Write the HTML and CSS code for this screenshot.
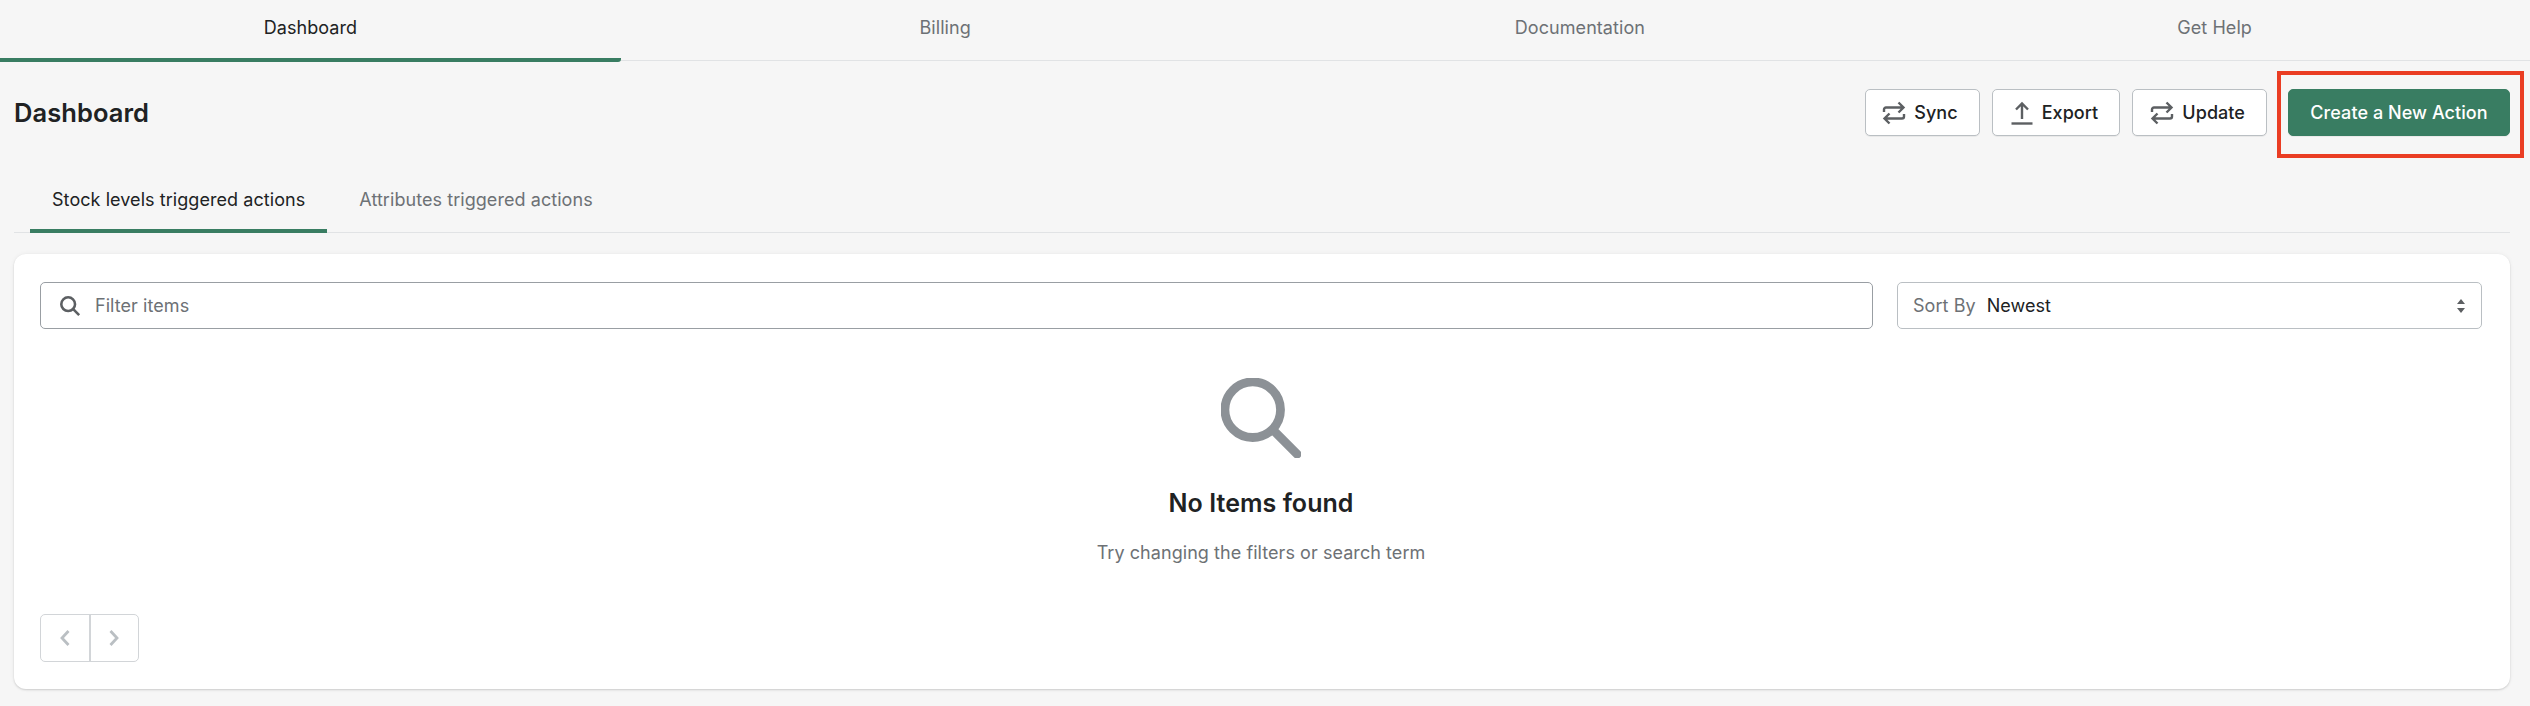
FILE: index.html
```html
<!DOCTYPE html>
<html lang="en">
<head>
  <meta charset="UTF-8" />
  <title>Dashboard</title>
  <link rel="stylesheet" href="styles.css">
</head>
<body>
  <!-- Main navigation -->
  <nav class="main-nav">
    <a class="main-tab active">Dashboard</a>
    <a class="main-tab">Billing</a>
    <a class="main-tab">Documentation</a>
    <a class="main-tab">Get Help</a>
  </nav>

  <main class="page">
    <header class="page-header">
      <h1>Dashboard</h1>
      <div class="actions">
        <button class="btn btn-sync">
          <svg class="btn-icon" viewBox="0 0 24 24"><path d="M2 11V8.500a2 2 0 0 1 2-2H21M16.500 1.500l5 5-5 5M22 13v2.500a2 2 0 0 1-2 2H3M7.500 12.500l-5 5 5 5"/></svg>
          Sync
        </button>
        <button class="btn">
          <svg class="btn-icon" viewBox="0 0 24 24"><path d="M12 18V2.500M6 8.500l6-6 6 6"/><path d="M1.500 22.500h21"/></svg>
          Export
        </button>
        <button class="btn">
          <svg class="btn-icon" viewBox="0 0 24 24"><path d="M2 11V8.500a2 2 0 0 1 2-2H21M16.500 1.500l5 5-5 5M22 13v2.500a2 2 0 0 1-2 2H3M7.500 12.500l-5 5 5 5"/></svg>
          Update
        </button>
        <div class="highlighted">
          <button class="btn btn-primary">Create a New Action</button>
          <span class="red-box"></span>
        </div>
      </div>
    </header>

    <!-- Action type tabs -->
    <div class="sub-tabs">
      <a class="sub-tab active">Stock levels triggered actions</a>
      <a class="sub-tab">Attributes triggered actions</a>
    </div>

    <section class="card">
      <div class="filters">
        <label class="search">
          <svg class="search-icon" viewBox="0 0 24 24"><circle cx="10" cy="10" r="7.500"/><path d="m15.500 15.500 6.500 6.500"/></svg>
          <input type="text" placeholder="Filter items" />
        </label>
        <div class="sort">
          <span class="sort-label">Sort By</span>
          <span class="sort-value">Newest</span>
          <svg class="sort-arrows" viewBox="0 0 10 16"><path d="M5 1l4 5H1zM5 15l-4-5h8z"/></svg>
        </div>
      </div>

      <div class="empty">
        <svg class="empty-icon" viewBox="0 0 82 82"><circle cx="32.500" cy="32.500" r="28.500"/><path d="m54 54 24 24"/></svg>
        <h2>No Items found</h2>
        <p>Try changing the filters or search term</p>
      </div>

      <div class="pager">
        <button class="pager-btn"><svg viewBox="0 0 12 18"><path d="M9.500 2 3 9l6.500 7"/></svg></button>
        <button class="pager-btn"><svg viewBox="0 0 12 18"><path d="M2.500 2 9 9l-6.500 7"/></svg></button>
      </div>
    </section>
  </main>
</body>
</html>
```

FILE: styles.css
```css
* {
  box-sizing: border-box;
}

body {
  margin: 0;
  background: #f6f6f6;
  color: #202223;
  font-family: Inter, "Liberation Sans", sans-serif;
  font-size: 18px;
  letter-spacing: 0.06px;
}

.main-nav {
  display: flex;
  gap: 14px;
  height: 61px;
  padding-right: 5px;
  border-bottom: 1px solid #e1e3e5;
}

.main-tab {
  flex: 1;
  height: 62px;
  padding-top: 17px;
  text-align: center;
  font-size: 18px;
  line-height: 22px;
  color: #6d7175;
}

.main-tab.active {
  color: #202223;
  border-bottom: 4px solid #397d62;
  border-radius: 0 3px 3px 0;
}

.page {
  padding: 28px 20px 17px 14px;
}

.page-header {
  display: flex;
  align-items: center;
  justify-content: space-between;
  height: 47px;
}

h1 {
  margin: 0;
  font-size: 25.500px;
  font-weight: 600;
}

.actions {
  display: flex;
  align-items: center;
  gap: 12px;
}

.btn {
  display: flex;
  align-items: center;
  justify-content: center;
  gap: 8px;
  height: 47px;
  padding: 0 21px 0 17px;
  background: white;
  border: 1px solid #babfc3;
  border-radius: 5px;
  box-shadow: 0 1px 0 rgba(0,0,0,0.05);
  color: #202223;
  font-family: inherit;
  font-size: 18px;
  font-weight: 500;
  letter-spacing: inherit;
}

.btn-sync {
  padding-left: 16px;
}

.btn-icon {
  width: 24px;
  height: 24px;
  fill: none;
  stroke: #5c5f62;
  stroke-width: 2.400;
}

.highlighted {
  position: relative;
  margin-left: 9px;
}

.btn-primary {
  width: 222px;
  padding: 0;
  background: #397d62;
  border-color: #397d62;
  color: white;
}

.red-box {
  position: absolute;
  top: -18px;
  right: -14px;
  bottom: -22px;
  left: -11px;
  border: 4px solid #ea3d23;
}

.sub-tabs {
  display: flex;
  height: 97px;
  padding: 0 16px;
  border-bottom: 1px solid #e1e3e5;
}

.sub-tab {
  height: 97px;
  padding: 53px 22px 0;
  margin-right: 10px;
  font-size: 18px;
  line-height: 22px;
  color: #6d7175;
}

.sub-tab.active {
  color: #202223;
  border-bottom: 4px solid #397d62;
  border-radius: 3px 3px 0 0;
}

.card {
  margin-top: 21px;
  height: 435px;
  padding: 28px 28px 28px 26px;
  background: white;
  border-radius: 12px;
  box-shadow: 0 0 5px rgba(23,24,24,0.05), 0 1px 2px rgba(0,0,0,0.15);
}

.filters {
  display: flex;
  gap: 24px;
}

.search {
  flex: 1;
  display: flex;
  align-items: center;
  gap: 14px;
  height: 47px;
  padding: 0 18px;
  border: 1px solid #999ea3;
  border-radius: 5px;
}

.search-icon {
  width: 22px;
  height: 22px;
  fill: none;
  stroke: #5c5f62;
  stroke-width: 2.800;
}

.search input {
  flex: 1;
  border: 0;
  outline: 0;
  padding: 0;
  font-family: inherit;
  font-size: 18px;
  letter-spacing: inherit;
}

.search input::placeholder {
  color: #6d7175;
  opacity: 1;
}

.sort {
  width: 585px;
  display: flex;
  align-items: center;
  height: 47px;
  padding: 0 15px;
  border: 1px solid #babfc3;
  border-radius: 5px;
}

.sort-label {
  color: #6d7175;
  margin-right: 11px;
}

.sort-value {
  flex: 1;
}

.sort-arrows {
  width: 10px;
  height: 16px;
  fill: #5c5f62;
}

.empty {
  display: flex;
  flex-direction: column;
  align-items: center;
  padding-top: 49px;
}

.empty-icon {
  width: 80px;
  height: 80px;
  fill: none;
  stroke: #8c9196;
  stroke-width: 9;
  stroke-linecap: round;
}

.empty h2 {
  margin: 29px 0 0;
  font-size: 25px;
  line-height: 32px;
  font-weight: 600;
}

.empty p {
  margin: 22px 0 0;
  font-size: 18px;
  line-height: 24px;
  color: #6d7175;
}

.pager {
  display: flex;
  width: 99px;
  height: 48px;
  margin-top: 49px;
  border: 1px solid #d2d5d8;
  border-radius: 5px;
}

.pager-btn {
  flex: 1;
  display: flex;
  align-items: center;
  justify-content: center;
  background: none;
  border: 0;
  padding: 0;
}

.pager-btn + .pager-btn {
  border-left: 2px solid #d2d5d8;
}

.pager-btn svg {
  width: 12px;
  height: 18px;
  fill: none;
  stroke: #babfc3;
  stroke-width: 2.800;
}
```
